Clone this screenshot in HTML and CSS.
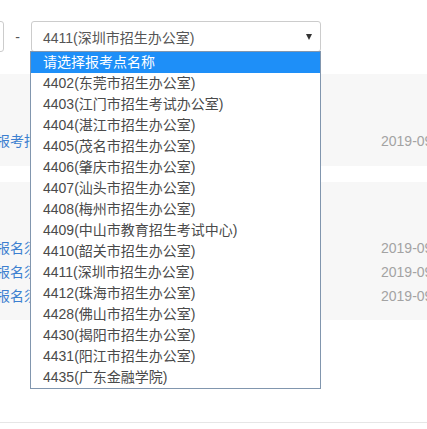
FILE: index.html
```html
<!DOCTYPE html>
<html lang="zh-CN">

<head>
    <meta charset="UTF-8">
    <meta name="viewport" content="width=device-width, initial-scale=1">
    <title>报考点查询</title>
    <link rel="stylesheet" href="styles.css">
</head>

<body>
    <div class="filter">
        <div class="date-box"></div>
        <span class="dash">-</span>
        <div class="select-wrap">
            <div class="select">
                <span>4411(深圳市招生办公室)</span>
                <span class="arrow"></span>
            </div>
            <ul class="options">
                <li class="active">请选择报考点名称</li>
                <li>4402(东莞市招生办公室)</li>
                <li>4403(江门市招生考试办公室)</li>
                <li>4404(湛江市招生办公室)</li>
                <li>4405(茂名市招生办公室)</li>
                <li>4406(肇庆市招生办公室)</li>
                <li>4407(汕头市招生办公室)</li>
                <li>4408(梅州市招生办公室)</li>
                <li>4409(中山市教育招生考试中心)</li>
                <li>4410(韶关市招生办公室)</li>
                <li>4411(深圳市招生办公室)</li>
                <li>4412(珠海市招生办公室)</li>
                <li>4428(佛山市招生办公室)</li>
                <li>4430(揭阳市招生办公室)</li>
                <li>4431(阳江市招生办公室)</li>
                <li>4435(广东金融学院)</li>
            </ul>
        </div>
    </div>

    <div class="notice-list">
        <div class="panel panel-first">
            <div class="row">
                <a class="row-title" href="#">报考指南</a>
                <span class="row-date">2019-09-20</span>
            </div>
        </div>

        <div class="panel panel-second">
            <div class="row">
                <a class="row-title" href="#">报名须知</a>
                <span class="row-date">2019-09-18</span>
            </div>
            <div class="row">
                <a class="row-title" href="#">报名须知</a>
                <span class="row-date">2019-09-18</span>
            </div>
            <div class="row">
                <a class="row-title" href="#">报名须知</a>
                <span class="row-date">2019-09-18</span>
            </div>
        </div>
    </div>

    <div class="footer-line"></div>
</body>

</html>
```

FILE: styles.css
```css
body {
    font-family: "Liberation Sans", "Noto Sans CJK SC", sans-serif;
    font-size: 14px;
    margin: 0;
    padding: 0;
    background-color: #fff;
    color: #555;
    overflow: hidden;
}

.filter {
    display: flex;
    align-items: center;
    height: 31px;
    margin-top: 21px;
}

.date-box {
    width: 100px;
    height: 29px;
    margin-left: -98px;
    border: 1px solid #ccc;
    border-radius: 3px;
    flex-shrink: 0;
}

.dash {
    width: 27px;
    text-align: center;
    color: #555;
    flex-shrink: 0;
}

.select-wrap {
    position: relative;
    width: 290px;
    flex-shrink: 0;
}

.select {
    display: flex;
    justify-content: space-between;
    align-items: center;
    height: 29px;
    padding: 0 8px 0 11px;
    border: 1px solid #ccc;
    border-radius: 3px;
    color: #555;
}

.arrow {
    width: 0;
    height: 0;
    border-left: 3.5px solid transparent;
    border-right: 3.5px solid transparent;
    border-top: 6px solid #333;
    margin-top: 1px;
}

.options {
    position: absolute;
    top: 30px;
    left: -1px;
    z-index: 10;
    width: 289px;
    list-style: none;
    margin: 0;
    padding: 0;
    background: #fff;
    border: 1px solid #8196ae;
}

.options li {
    height: 21px;
    line-height: 21px;
    padding-left: 12px;
    color: #4a4a4a;
    white-space: nowrap;
}

.options li.active {
    background-color: #1e8ff8;
    color: #fff;
}

.notice-list {
    margin-top: 22px;
}

.panel {
    background-color: #f7f7f7;
}

.panel-first {
    height: 92px;
    padding-top: 57px;
    box-sizing: border-box;
}

.panel-second {
    height: 138px;
    padding-top: 54px;
    margin-top: 16px;
    box-sizing: border-box;
}

.row {
    display: flex;
    line-height: 21px;
}

.panel-second .row {
    line-height: 24px;
}

.row-title {
    flex: 1;
    margin-left: -4px;
    color: #3c7fd0;
    text-decoration: none;
}

.row-date {
    width: 46px;
    white-space: nowrap;
    color: #a3a3a3;
}

.footer-line {
    margin-top: 102px;
    border-top: 1px solid #e6e6e6;
}
```
